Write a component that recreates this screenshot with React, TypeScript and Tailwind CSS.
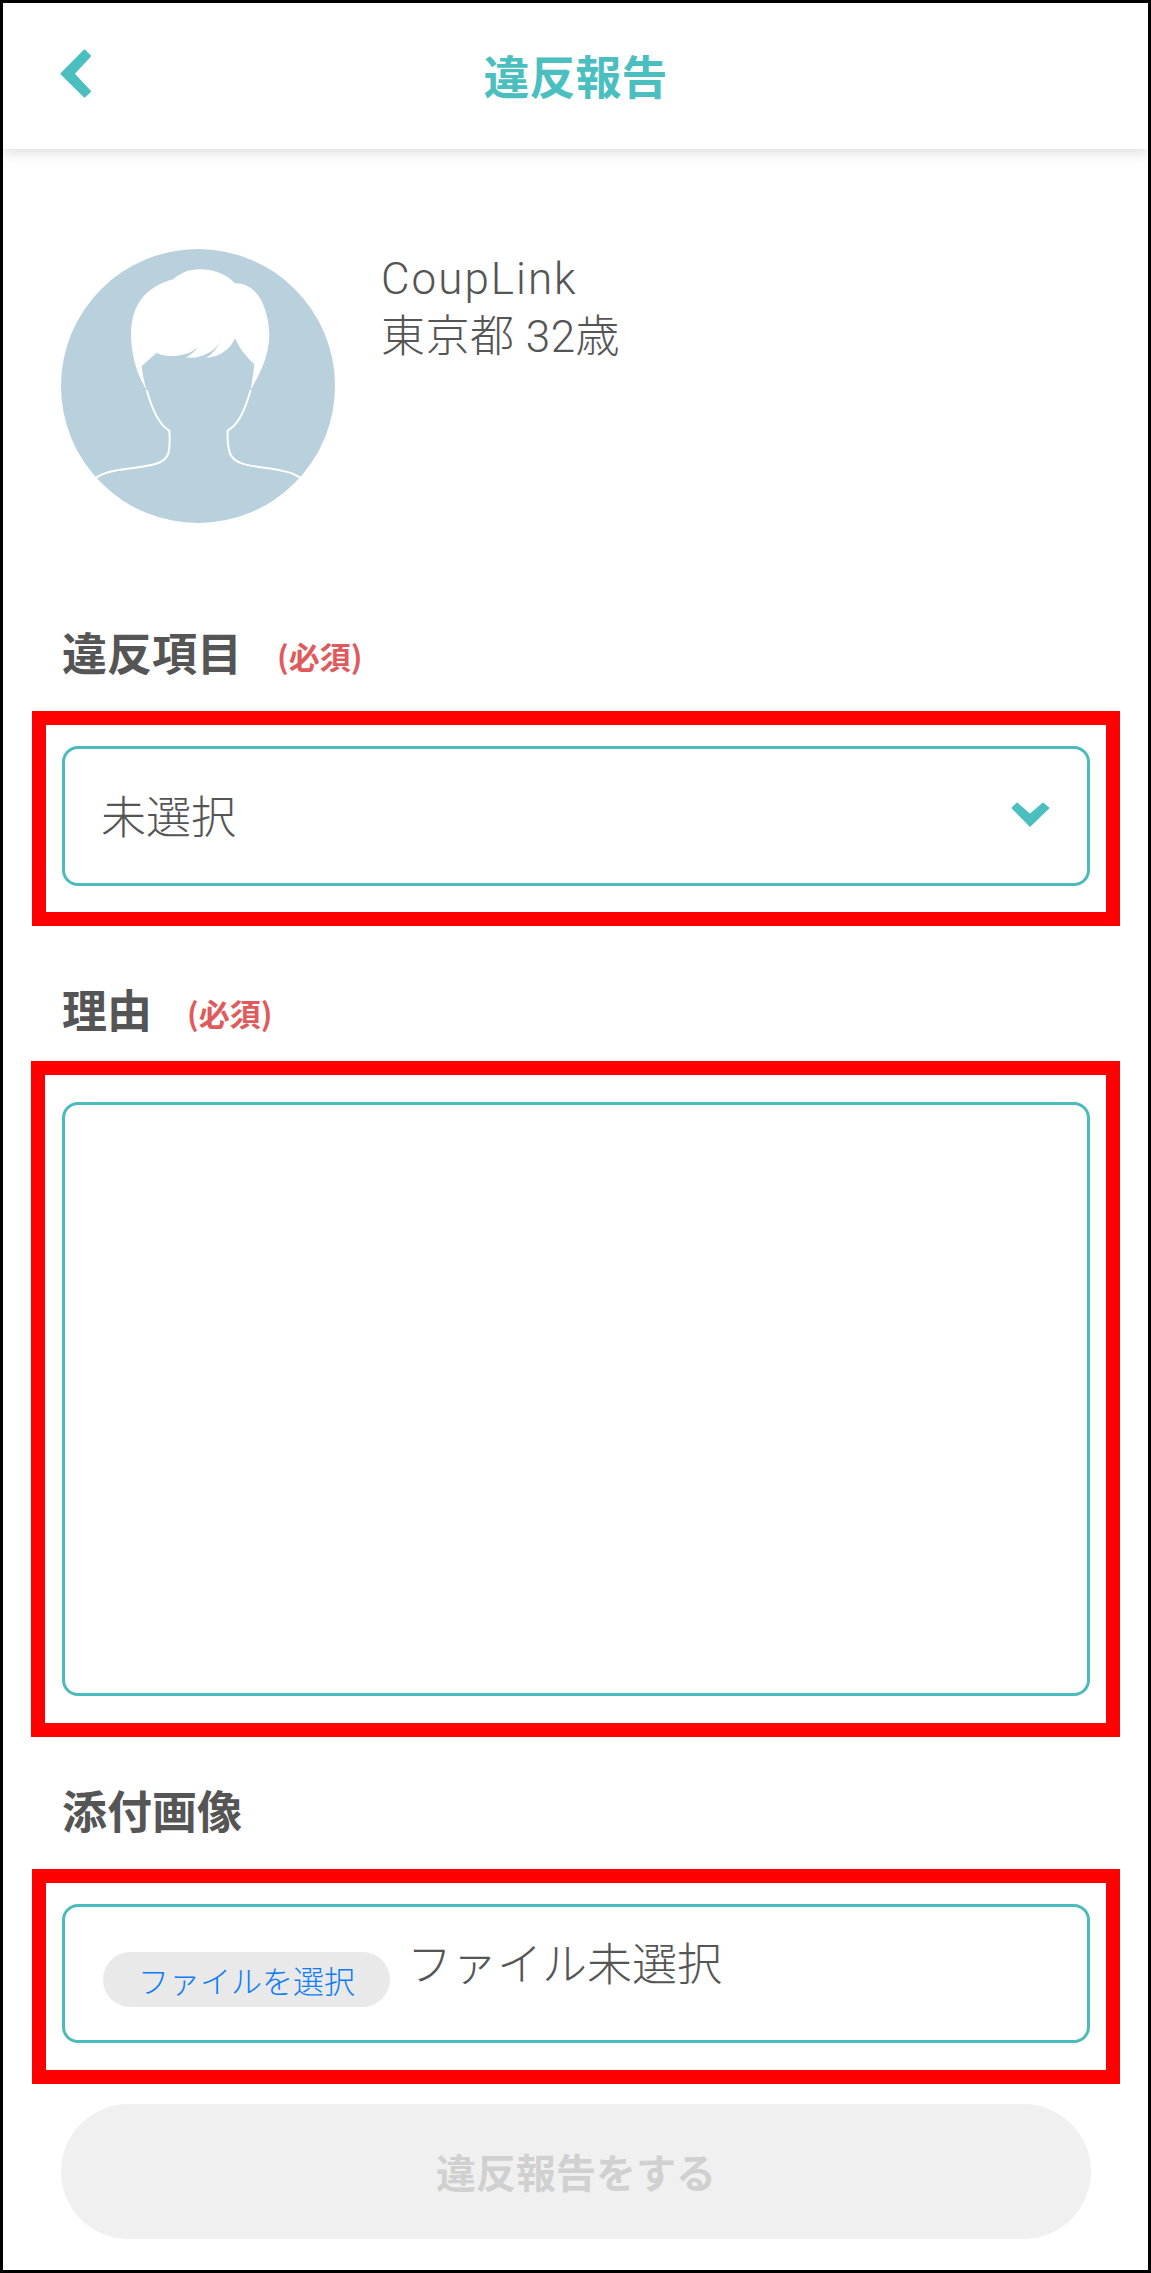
import React from "react";

function Avatar() {
  return (
    <svg viewBox="63 57 822 822" className="w-[274px] h-[274px] shrink-0">
      <circle cx="474" cy="468" r="411" fill="#b9d0dd" />
      <path
        fill="#fff"
        d="M305 408 L350 368 C370 382 440 385 475 350 C465 365 450 375 438 382 C480 388 525 365 540 335 C530 358 515 372 498 384 C535 382 570 360 585 325 C600 358 620 382 643 403 C640 430 636 455 632 480 C660 430 688 380 688 310 C682 215 645 160 585 160 C555 130 520 118 480 118 C445 118 420 130 400 148 C330 168 272 210 273 320 C276 390 295 440 320 480 C312 455 307 430 305 408 Z"
      />
      <path
        fill="none"
        stroke="#fff"
        strokeWidth="6"
        d="M320 480 C338 545 358 585 388 602 C390 630 390 650 385 670 C372 712 300 708 225 722 C200 726 182 734 168 743"
      />
      <path
        fill="none"
        stroke="#fff"
        strokeWidth="6"
        d="M632 480 C612 550 592 585 563 602 C562 630 563 650 570 670 C585 712 660 708 725 722 C750 726 768 734 780 743"
      />
    </svg>
  );
}

function Label({ text, required }: { text: string; required?: boolean }) {
  return (
    <div className="flex items-center h-[60px] pl-[59px]">
      <span className="text-[45px] leading-[60px] font-bold text-[#555555]">{text}</span>
      {required && (
        <span className="ml-[35px] mt-[7px] text-[31px] leading-[60px] font-bold text-[#e05a5c]">(必須)</span>
      )}
    </div>
  );
}

export default function App() {
  return (
    <div className="w-[1151px] h-[2273px] border-[3px] border-black bg-white box-border overflow-hidden font-['Noto_Sans_CJK_JP','Noto_Sans',sans-serif]">
      <header className="grid grid-cols-[1fr_auto_1fr] items-center h-[146px] px-[57px] shadow-[0_4px_12px_rgba(0,0,0,0.13)]">
        <svg viewBox="0 0 31 49" className="w-[31px] h-[49px] -mt-[6px]">
          <polygon
            points="1.5,24.7 24.5,1.5 30,7 13.5,24.7 30,42.4 24.5,47.5"
            fill="#4bbfbf"
            stroke="#4bbfbf"
            strokeWidth="2"
            strokeLinejoin="round"
          />
        </svg>
        <h1 className="text-[46px] leading-[60px] font-bold text-[#4bbfbf] -mt-[4px]">違反報告</h1>
        <div />
      </header>

      <section className="flex gap-[46px] mt-[100px] pl-[58px] h-[274px]">
        <Avatar />
        <div className="text-[44px] leading-[58px] font-light text-[#555555] tracking-[0.5px] mt-[1px] font-['Roboto','Noto_Sans_CJK_JP',sans-serif]">
          <div className="tracking-[2px]">CoupLink</div>
          <div>東京都 32歳</div>
        </div>
      </section>

      <div className="mt-[99px]">
        <Label text="違反項目" required />
      </div>
      <div className="ml-[29px] mt-[29px] w-[1088px] h-[215px] border-[14px] border-[#ff0000] pt-[21px] px-[16px]">
        <div className="flex items-center justify-between h-[140px] rounded-[16px] border-[3px] border-[#4bbaba] pl-[36px] pr-[37px]">
          <span className="text-[45px] leading-[60px] font-light text-[#555555] -mt-[3px]">未選択</span>
          <svg viewBox="0 0 39 25" className="w-[39px] h-[25px] -mt-[3px]">
            <polygon
              points="1.3,6 6,1.3 19,12.5 32,1.3 37.7,6 19,24"
              fill="#4bbfbf"
              stroke="#4bbfbf"
              strokeWidth="1.5"
              strokeLinejoin="round"
            />
          </svg>
        </div>
      </div>

      <div className="mt-[53px]">
        <Label text="理由" required />
      </div>
      <div className="ml-[28px] mt-[22px] w-[1089px] h-[676px] border-[14px] border-[#ff0000] pt-[27px] pl-[17px] pr-[16px]">
        <div className="h-[594px] rounded-[16px] border-[3px] border-[#4bbaba]" />
      </div>

      <div className="mt-[43px]">
        <Label text="添付画像" />
      </div>
      <div className="ml-[29px] mt-[29px] w-[1088px] h-[215px] border-[14px] border-[#ff0000] pt-[21px] px-[16px]">
        <div className="flex items-start h-[139px] rounded-[16px] border-[3px] border-[#4bbaba] pl-[38px]">
          <button className="mt-[45px] w-[287px] h-[55px] rounded-full bg-[#e9e9e9] text-[31px] leading-[55px] text-[#0f7cf5] font-light text-center">
            ファイルを選択
          </button>
          <span className="ml-[17px] mt-[25px] text-[45px] leading-[60px] font-light text-[#555555]">ファイル未選択</span>
        </div>
      </div>

      <button className="block ml-[58px] mt-[20px] w-[1030px] h-[135px] rounded-full bg-[#f0f0f0] text-[40px] font-bold text-[#d0d0d0] leading-[135px] text-center">
        違反報告をする
      </button>
    </div>
  );
}
